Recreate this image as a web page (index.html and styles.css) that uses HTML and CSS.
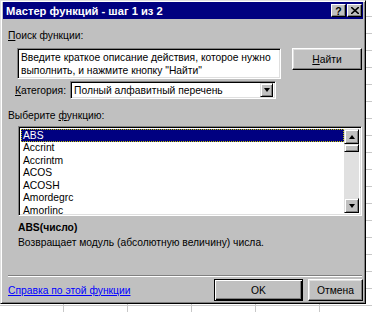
FILE: index.html
```html
<!DOCTYPE html>
<html lang="ru">
<head>
    <meta charset="UTF-8">
    <title>Мастер функций - шаг 1 из 2</title>
    <link rel="stylesheet" href="styles.css">
</head>
<body>
    <div class="dialog">
        <div class="titlebar">
            <span class="title">Мастер функций - шаг 1 из 2</span>
            <span class="title-btn help">?</span>
            <span class="title-btn close">
                <svg width="8" height="7" viewBox="0 0 8 7"><path d="M0 0 L8 7 M8 0 L0 7" stroke="#000" stroke-width="1.6"/></svg>
            </span>
        </div>

        <div class="label search-label"><u>П</u>оиск функции:</div>
        <div class="search-row">
            <div class="field search-box">Введите краткое описание действия, которое нужно выполнить, и нажмите кнопку "Найти"</div>
            <div class="btn find-btn"><u>Н</u>айти</div>
        </div>

        <div class="category-row">
            <span class="label"><u>К</u>атегория:</span>
            <div class="field select">
                <span class="select-text">Полный алфавитный перечень</span>
                <span class="drop-btn"><span class="arrow-down"></span></span>
            </div>
        </div>

        <div class="label list-label">Выберите <u>ф</u>ункцию:</div>
        <div class="field listbox">
            <ul class="items">
                <li class="selected">ABS</li>
                <li>Accrint</li>
                <li>Accrintm</li>
                <li>ACOS</li>
                <li>ACOSH</li>
                <li>Amordegrc</li>
                <li>Amorlinc</li>
            </ul>
            <div class="scrollbar">
                <span class="sb-btn"><span class="arrow-up"></span></span>
                <span class="sb-thumb"></span>
                <span class="sb-track"></span>
                <span class="sb-btn"><span class="arrow-down"></span></span>
            </div>
        </div>

        <div class="desc">
            <div class="desc-name">ABS(число)</div>
            <div class="desc-text">Возвращает модуль (абсолютную величину) числа.</div>
        </div>

        <div class="separator"></div>

        <div class="footer">
            <a class="help-link" href="#">Справка по этой функции</a>
            <div class="btn ok-btn default">OK</div>
            <div class="btn cancel-btn">Отмена</div>
        </div>
    </div>
</body>
</html>
```

FILE: styles.css
```css
body {
    margin: 0;
    width: 372px;
    height: 312px;
    overflow: hidden;
    background-color: #fff;
    background-image:
        repeating-linear-gradient(90deg, transparent 0 63px, #c8c8c8 63px 64px),
        repeating-linear-gradient(180deg, transparent 0 16px, #c8c8c8 16px 17px);
    font-family: 'Liberation Sans', Arial, sans-serif;
    font-size: 10.3px;
    color: #000;
}
.dialog {
    width: 366px;
    height: 304px;
    box-sizing: border-box;
    background-color: #c0c0c0;
    border: 1px solid;
    border-color: #dfdfdf #000 #000 #dfdfdf;
    box-shadow: inset 1px 1px #fff, inset -1px -1px #808080;
    padding: 1px 2px 0 2px;
    display: flex;
    flex-direction: column;
}
.titlebar {
    height: 17px;
    background-color: #000080;
    color: #fff;
    display: flex;
    align-items: center;
    padding: 0 1px 0 3px;
    gap: 1px;
}
.title {
    font-weight: bold;
    font-size: 11.2px;
    flex: 1;
}
.title-btn {
    width: 15px;
    height: 13px;
    box-sizing: border-box;
    background-color: #c0c0c0;
    border: 1px solid;
    border-color: #fff #000 #000 #fff;
    box-shadow: inset -1px -1px #808080;
    color: #000;
    display: flex;
    align-items: center;
    justify-content: center;
    font-weight: bold;
    font-size: 10.5px;
}
.label {
    line-height: 13px;
}
.search-label {
    margin: 10px 0 0 5px;
}
.search-row {
    display: flex;
    align-items: flex-start;
    margin-top: 6px;
    padding-left: 14px;
}
.field {
    background-color: #fff;
    border: 1px solid;
    border-color: #808080 #fff #fff #808080;
    box-shadow: inset 1px 1px #000, inset -1px -1px #dfdfdf;
    box-sizing: border-box;
}
.search-box {
    width: 264px;
    height: 31px;
    padding: 2px 2px 0 3px;
    line-height: 13px;
}
.btn {
    box-sizing: border-box;
    height: 22px;
    background-color: #c0c0c0;
    border: 1px solid;
    border-color: #fff #000 #000 #fff;
    box-shadow: inset -1px -1px #808080, inset 1px 1px #dfdfdf;
    display: flex;
    align-items: center;
    justify-content: center;
}
.find-btn {
    width: 70px;
    margin-left: 11px;
}
.category-row {
    display: flex;
    align-items: center;
    margin-top: 2px;
    padding-left: 12px;
    gap: 4px;
}
.select {
    width: 206px;
    height: 18px;
    display: flex;
    align-items: center;
    padding: 2px;
}
.select-text {
    flex: 1;
    padding-left: 1px;
}
.drop-btn {
    width: 13px;
    height: 14px;
    box-sizing: border-box;
    background-color: #c0c0c0;
    border: 1px solid;
    border-color: #dfdfdf #000 #000 #dfdfdf;
    box-shadow: inset 1px 1px #fff, inset -1px -1px #808080;
    display: flex;
    align-items: center;
    justify-content: center;
}
.arrow-down, .arrow-up {
    width: 0;
    height: 0;
    border-left: 3.5px solid transparent;
    border-right: 3.5px solid transparent;
}
.arrow-down {
    border-top: 4px solid #000;
}
.arrow-up {
    border-bottom: 4px solid #000;
}
.list-label {
    margin: 10px 0 0 5px;
}
.listbox {
    margin: 4px 0 0 15px;
    width: 344px;
    height: 90px;
    display: flex;
    padding: 2px;
}
.items {
    list-style: none;
    margin: 0;
    padding: 0;
    flex: 1;
    line-height: 12.5px;
}
.items li {
    padding-left: 2px;
}
.items li.selected {
    background-color: #000080;
    color: #fff;
    outline: 1px dotted #c0c000;
    outline-offset: -1px;
    line-height: 13px;
}
.scrollbar {
    width: 15px;
    display: flex;
    flex-direction: column;
}
.sb-btn, .sb-thumb {
    box-sizing: border-box;
    background-color: #c0c0c0;
    border: 1px solid;
    border-color: #dfdfdf #000 #000 #dfdfdf;
    box-shadow: inset 1px 1px #fff, inset -1px -1px #808080;
}
.sb-btn {
    height: 15px;
    display: flex;
    align-items: center;
    justify-content: center;
}
.sb-thumb {
    height: 8px;
}
.sb-track {
    flex: 1;
    background-color: #e0e0e0;
}
.desc {
    margin: 4px 0 0 15px;
    line-height: 15px;
}
.desc-name {
    font-weight: bold;
}
.separator {
    margin: auto 0 0 5px;
    width: 354px;
    border-top: 1px solid #808080;
    border-bottom: 1px solid #fff;
}
.footer {
    display: flex;
    align-items: center;
    margin: 2px 0 2px 5px;
    gap: 5px;
}
.help-link {
    color: #0000ff;
    flex: 1;
}
.ok-btn {
    width: 89px;
}
.ok-btn.default {
    border-color: #000;
    box-shadow: inset 1px 1px #fff, inset -1px -1px #000, inset -2px -2px #808080;
}
.cancel-btn {
    width: 55px;
}
```
